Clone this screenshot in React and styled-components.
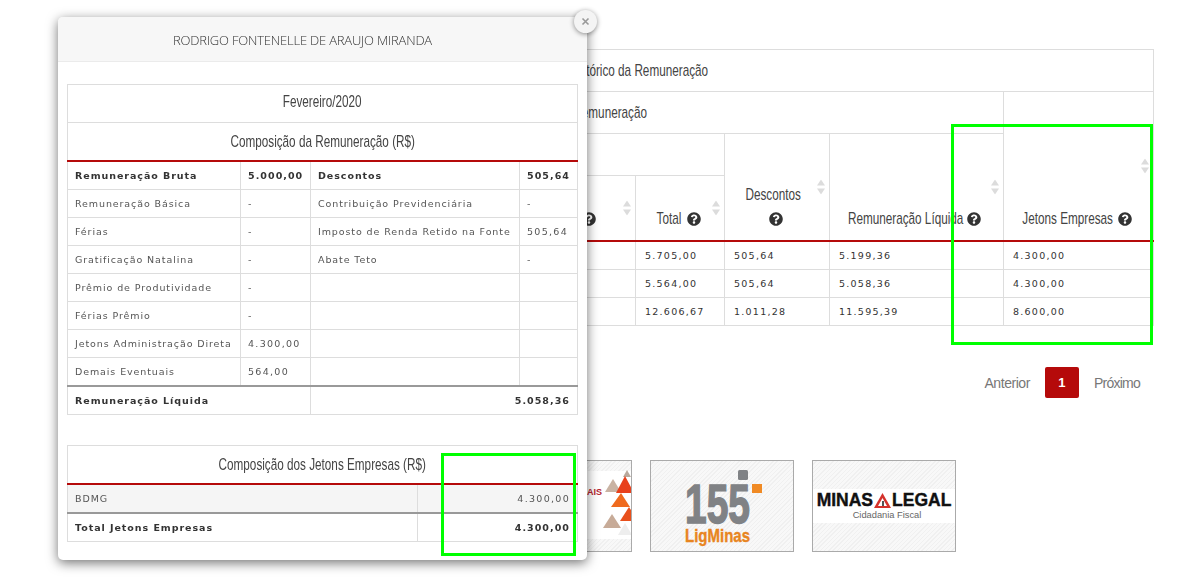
import React from "react";
import styled, { createGlobalStyle } from "styled-components";
import { FaQuestionCircle } from "react-icons/fa";

const Global = createGlobalStyle`
  html, body { margin: 0; padding: 0; background: #fff; }
  body { font-family: "Liberation Sans", Arial, sans-serif; }
`;

const headFont = `"Liberation Sans", Arial, sans-serif`;
const dataFont = `"DejaVu Sans", Verdana, sans-serif`;

const Page = styled.div`
  width: 1177px;
  height: 583px;
  overflow: hidden;
  box-sizing: border-box;
  padding: 49px 24px 0 488px;
`;

const CondBox = styled.span`
  display: inline-flex;
  justify-content: center;
  vertical-align: baseline;
  width: ${(p) => p.$w}px;
`;

const CondInner = styled.span`
  flex: none;
  white-space: nowrap;
  transform: scaleX(0.69);
  transform-origin: center;
`;

const Cond = ({ w, children }) => (
  <CondBox $w={w}>
    <CondInner>{children}</CondInner>
  </CondBox>
);

const HistoryTable = styled.table`
  width: 665px;
  table-layout: fixed;
  border-collapse: collapse;
  border: 1px solid #ddd;
`;

const BarCell = styled.th`
  height: 41px;
  padding: 0 0 0 ${(p) => p.$indent || 0}px;
  border: 1px solid #ddd;
  font: 400 17px ${headFont};
  color: #444;
  text-align: left;
`;

const HeadCell = styled.th`
  position: relative;
  height: 47px;
  padding: 8px ${(p) => (p.$wrap ? 8 : 3)}px 9px 0;
  border: 1px solid #ddd;
  border-bottom: 2px solid #b50a0a;
  font: 400 17px/24px ${headFont};
  color: #444;
  text-align: center;
  vertical-align: bottom;
  white-space: nowrap;
  svg.help { vertical-align: -2px; margin-left: 5px; color: #333; }
`;

const EmptyHead = styled.th`
  height: 41px;
  padding: 0;
  border: 1px solid #ddd;
`;

const StackedHelp = styled(FaQuestionCircle)`
  vertical-align: -2px;
  margin-left: 6px;
  color: #333;
`;

const SortMark = styled.svg`
  position: absolute;
  right: 4px;
  top: 50%;
  transform: translateY(-50%);
  width: 8px;
  height: 15px;
  fill: #dcdcdc;
`;

const DataCell = styled.td`
  height: 27px;
  padding: 0 0 0 9px;
  border: 1px solid #ddd;
  font: 400 9.5px ${dataFont};
  letter-spacing: 1.25px;
  color: #333;
`;

const Pager = styled.nav`
  display: flex;
  justify-content: flex-end;
  align-items: center;
  gap: 15px;
  margin-top: 41px;
  padding-right: 13px;
`;

const PagerLink = styled.span`
  font: 400 14px ${headFont};
  letter-spacing: ${(p) => (p.$tight ? "-0.75px" : "-0.45px")};
  color: #777;
`;

const PagerCurrent = styled.span`
  width: 34px;
  height: 31px;
  display: flex;
  align-items: center;
  justify-content: center;
  background: #b50a0a;
  border-radius: 2px;
  color: #fff;
  font: 700 13px ${headFont};
`;

const LogoRow = styled.div`
  display: flex;
  gap: 18px;
  margin-top: 62px;
`;

const LogoCard = styled.div`
  position: relative;
  width: 144px;
  height: 92px;
  box-sizing: border-box;
  border: 1px solid #aaa;
  overflow: hidden;
  background: repeating-linear-gradient(135deg, #f8f8f8 0 2px, #f0f0f0 2px 3px);
  display: flex;
  flex-direction: column;
  align-items: center;
  justify-content: center;
`;

const SvgFill = styled.svg`
  display: block;
  width: 142px;
  height: 90px;
`;

const LegalBand = styled.div`
  width: 100%;
  background: #fff;
  display: flex;
  flex-direction: column;
  align-items: center;
  padding: 1px 0 3px;
`;

const LegalName = styled.div`
  display: flex;
  align-items: center;
  gap: 1px;
  font: 700 17.5px/20px "Liberation Sans", sans-serif;
  -webkit-text-stroke: 0.4px #111;
  color: #111;
`;

const LegalSub = styled.div`
  font: 400 9.3px/10px "Liberation Sans", sans-serif;
  color: #666;
  padding-left: 6px;
`;

const Modal = styled.section`
  position: fixed;
  left: 58px;
  top: 17px;
  width: 529px;
  height: 543px;
  background: #fff;
  border-radius: 5px;
  box-shadow: 0 3px 12px rgba(0, 0, 0, 0.55);
`;

const ModalHeader = styled.header`
  height: 42px;
  padding: 2px 40px 0 0;
  background: #f7f7f7;
  border-bottom: 1px solid #ebebeb;
  border-radius: 5px 5px 0 0;
  display: flex;
  align-items: center;
  justify-content: center;
  font: 300 13px "Open Sans", sans-serif;
  letter-spacing: -0.2px;
  color: #333;
`;

const CloseButton = styled.button`
  position: absolute;
  right: -10px;
  top: -7px;
  width: 23px;
  height: 23px;
  padding: 0;
  border: 0;
  border-radius: 50%;
  background: #f4f4f4;
  box-shadow: 0 1px 5px rgba(0, 0, 0, 0.45);
  color: #999;
  display: flex;
  align-items: center;
  justify-content: center;
`;

const ModalBody = styled.div`
  padding: 22px 9px 0;
  display: flex;
  flex-direction: column;
  gap: 30px;
`;

const DetailTable = styled.table`
  width: 510px;
  table-layout: fixed;
  border-collapse: collapse;
  border: 1px solid #ddd;
`;

const TitleCell = styled.th`
  height: ${(p) => (p.$lift ? 34 : 37)}px;
  padding: 0 0 ${(p) => (p.$lift ? 3 : 0)}px;
  border: 1px solid #ddd;
  border-bottom: ${(p) => (p.$accent ? "2px solid #b50a0a" : "1px solid #ddd")};
  font: 400 17px ${headFont};
  color: #444;
  text-align: center;
`;

const Cell = styled.td`
  height: 27px;
  padding: 0 7px;
  border: 1px solid #ddd;
  border-top: ${(p) => (p.$rule ? "2px solid #999" : "1px solid #ddd")};
  background: ${(p) => (p.$shade ? "#f5f5f5" : "transparent")};
  font: ${(p) => (p.$bold ? 700 : 400)} 9.5px ${dataFont};
  letter-spacing: ${(p) => (p.$num ? (p.$bold ? "1.05px" : "1.3px") : p.$bold ? "0.95px" : "0.9px")};
  white-space: nowrap;
  color: ${(p) => (p.$bold ? "#333" : "#555")};
  text-align: ${(p) => (p.$right ? "right" : "left")};
`;

const Annotation = styled.div`
  position: fixed;
  box-sizing: border-box;
  border: 3px solid #00ff00;
  pointer-events: none;
`;

const Sort = () => (
  <SortMark viewBox="0 0 8 15">
    <path d="M4 0 8 6H0Z" />
    <path d="M4 15 8 9H0Z" />
  </SortMark>
);

const Help = () => <FaQuestionCircle className="help" size={14} />;

const history = [
  ["5.705,00", "505,64", "5.199,36", "4.300,00"],
  ["5.564,00", "505,64", "5.058,36", "4.300,00"],
  ["12.606,67", "1.011,28", "11.595,39", "8.600,00"],
];

const composition = [
  ["Remuneração Básica", "-", "Contribuição Previdenciária", "-"],
  ["Férias", "-", "Imposto de Renda Retido na Fonte", "505,64"],
  ["Gratificação Natalina", "-", "Abate Teto", "-"],
  ["Prêmio de Produtividade", "-", "", ""],
  ["Férias Prêmio", "-", "", ""],
  ["Jetons Administração Direta", "4.300,00", "", ""],
  ["Demais Eventuais", "564,00", "", ""],
];

export default function App() {
  return (
    <>
      <Global />
      <Page>
        <HistoryTable>
          <colgroup>
            <col style={{ width: 147 }} />
            <col style={{ width: 89 }} />
            <col style={{ width: 105 }} />
            <col style={{ width: 174 }} />
            <col style={{ width: 150 }} />
          </colgroup>
          <thead>
            <tr>
              <BarCell colSpan={5} $indent={81}><Cond w={137}>Histórico da Remuneração</Cond></BarCell>
            </tr>
            <tr>
              <BarCell colSpan={4} $indent={6}><Cond w={146}>Composição da Remuneração</Cond></BarCell>
              <HeadCell rowSpan={3}>
                <Cond w={91}>Jetons Empresas</Cond>
                <Help />
                <Sort />
              </HeadCell>
            </tr>
            <tr>
              <EmptyHead colSpan={2} />
              <HeadCell rowSpan={2} $wrap>
                <Cond w={55}>Descontos</Cond>
                <br />
                <StackedHelp size={14} />
                <Sort />
              </HeadCell>
              <HeadCell rowSpan={2}>
                <Cond w={113}>Remuneração Líquida</Cond>
                <Help />
                <Sort />
              </HeadCell>
            </tr>
            <tr>
              <HeadCell>
                <Cond w={51}>Eventuais</Cond>
                <Help />
                <Sort />
              </HeadCell>
              <HeadCell>
                <Cond w={25}>Total</Cond>
                <Help />
                <Sort />
              </HeadCell>
            </tr>
          </thead>
          <tbody>
            {history.map((row) => (
              <tr key={row[0]}>
                <DataCell />
                {row.map((v, i) => (
                  <DataCell key={i}>{v}</DataCell>
                ))}
              </tr>
            ))}
          </tbody>
        </HistoryTable>

        <Pager>
          <PagerLink>Anterior</PagerLink>
          <PagerCurrent>1</PagerCurrent>
          <PagerLink $tight>Próximo</PagerLink>
        </Pager>

        <LogoRow>
          <LogoCard>
            <SvgFill viewBox="0 0 142 90">
              <rect x="0" y="10" width="142" height="68" fill="#fff" />
              <text x="98" y="34" fontFamily="Liberation Sans" fontWeight="700" fontSize="9" fill="#b5232e">AIS</text>
              <path d="M138 9l4 7h-8z" fill="#b9a99c" />
              <path d="M124 18l8 13h-16z" fill="#c9b3a3" />
              <path d="M136 15l9 17h-18z" fill="#e8401c" />
              <path d="M132 32l9 14h-19z" fill="#ef6a1e" />
              <path d="M140 46l9 14h-18z" fill="#e8501c" />
              <path d="M123 53l9 14h-18z" fill="#c7ab98" />
              <path d="M136 62l7 12h-14z" fill="#eeeeee" />
            </SvgFill>
          </LogoCard>
          <LogoCard>
            <SvgFill viewBox="0 0 142 90">
              <text x="34" y="62" fontFamily="Liberation Sans" fontWeight="700" fontSize="56" textLength="65" lengthAdjust="spacingAndGlyphs" fill="#808285" stroke="#808285" strokeWidth="1.6">155</text>
              <rect x="87" y="9" width="10" height="10" rx="1.5" fill="#808285" />
              <rect x="101" y="23" width="10" height="9" fill="#f08a24" />
              <text x="34" y="81" fontFamily="Liberation Sans" fontWeight="700" fontSize="19" textLength="65" lengthAdjust="spacingAndGlyphs" fill="#e8851f" stroke="#e8851f" strokeWidth="0.4">LigMinas</text>
            </SvgFill>
          </LogoCard>
          <LogoCard>
            <LegalBand>
              <LegalName>
                MINAS
                <svg width="17" height="15" viewBox="0 0 17 15">
                  <path d="M8.5 0 17 15H0Z" fill="#d4322c" />
                  <path d="M8.5 5 13 13H4Z" fill="#fff" />
                  <path d="M8 8h2v5H8z" fill="#555" />
                </svg>
                LEGAL
              </LegalName>
              <LegalSub>Cidadania Fiscal</LegalSub>
            </LegalBand>
          </LogoCard>
        </LogoRow>
      </Page>

      <Modal>
        <ModalHeader>RODRIGO FONTENELLE DE ARAUJO MIRANDA</ModalHeader>
        <CloseButton aria-label="Fechar">
          <svg width="9" height="9" viewBox="0 0 9 9">
            <path d="M1.5 1.5l6 6M7.5 1.5l-6 6" stroke="#999" strokeWidth="1.6" fill="none" />
          </svg>
        </CloseButton>
        <ModalBody>
          <DetailTable>
            <colgroup>
              <col style={{ width: 173 }} />
              <col style={{ width: 70 }} />
              <col style={{ width: 209 }} />
              <col style={{ width: 58 }} />
            </colgroup>
            <thead>
              <tr>
                <TitleCell colSpan={4} $lift><Cond w={82}>Fevereiro/2020</Cond></TitleCell>
              </tr>
              <tr>
                <TitleCell colSpan={4} $accent><Cond w={181}>Composição da Remuneração (R$)</Cond></TitleCell>
              </tr>
            </thead>
            <tbody>
              <tr>
                <Cell $bold>Remuneração Bruta</Cell>
                <Cell $bold $num>5.000,00</Cell>
                <Cell $bold>Descontos</Cell>
                <Cell $bold $num>505,64</Cell>
              </tr>
              {composition.map((row) => (
                <tr key={row[0]}>
                  {row.map((v, i) => (
                    <Cell key={i} $num={i % 2 === 1}>{v}</Cell>
                  ))}
                </tr>
              ))}
              <tr>
                <Cell $bold $rule colSpan={2}>Remuneração Líquida</Cell>
                <Cell $bold $rule $right $num colSpan={2}>5.058,36</Cell>
              </tr>
            </tbody>
          </DetailTable>

          <DetailTable>
            <colgroup>
              <col style={{ width: 350 }} />
              <col style={{ width: 160 }} />
            </colgroup>
            <thead>
              <tr>
                <TitleCell colSpan={2} $accent><Cond w={207}>Composição dos Jetons Empresas (R$)</Cond></TitleCell>
              </tr>
            </thead>
            <tbody>
              <tr>
                <Cell $shade>BDMG</Cell>
                <Cell $shade $right $num>4.300,00</Cell>
              </tr>
              <tr>
                <Cell $bold $rule>Total Jetons Empresas</Cell>
                <Cell $bold $rule $right $num>4.300,00</Cell>
              </tr>
            </tbody>
          </DetailTable>
        </ModalBody>
      </Modal>

      <Annotation style={{ left: 951, top: 124, width: 202, height: 221 }} />
      <Annotation style={{ left: 441, top: 453, width: 135, height: 103 }} />
    </>
  );
}
